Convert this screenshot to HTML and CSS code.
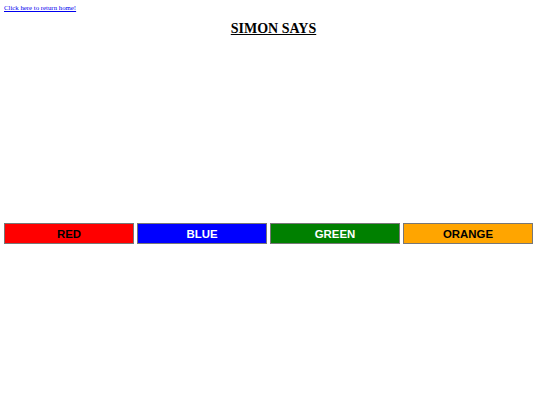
FILE: index.html
```html
<!DOCTYPE html>
<html lang="en">
<head>
  <meta charset="UTF-8" />
  <title>Simon Says</title>
  <link rel="stylesheet" href="styles.css">
</head>
<body>
  <a class="home-link" href="#">Click here to return home!</a>

  <h1 class="title">SIMON SAYS</h1>

  <div class="board"></div>

  <div class="pads">
    <button class="pad red">RED</button>
    <button class="pad blue">BLUE</button>
    <button class="pad green">GREEN</button>
    <button class="pad orange">ORANGE</button>
  </div>
</body>
</html>
```

FILE: styles.css
```css
body {
  font-family: 'Liberation Serif', serif;
  margin: 4px;
  background: #fff;
}

.home-link {
  display: block;
  font-size: 6.8px;
  color: #0000ee;
  line-height: 7px;
}

.title {
  text-align: center;
  font-size: 14px;
  text-decoration: underline;
  margin: 10px 0 0 7px;
  line-height: 16px;
}

.board {
  height: 186px;
}

.pads {
  display: flex;
  gap: 3px;
}

.pad {
  width: 130px;
  height: 21px;
  padding: 0;
  border: 1px solid #777;
  font-family: 'Liberation Sans', sans-serif;
  font-weight: bold;
  font-size: 11.4px;
}

.red { background: #ff0000; color: #000; }
.blue { background: #0000ff; color: #fff; }
.green { background: #008000; color: #fff; }
.orange { background: #ffa500; color: #000; }
```
